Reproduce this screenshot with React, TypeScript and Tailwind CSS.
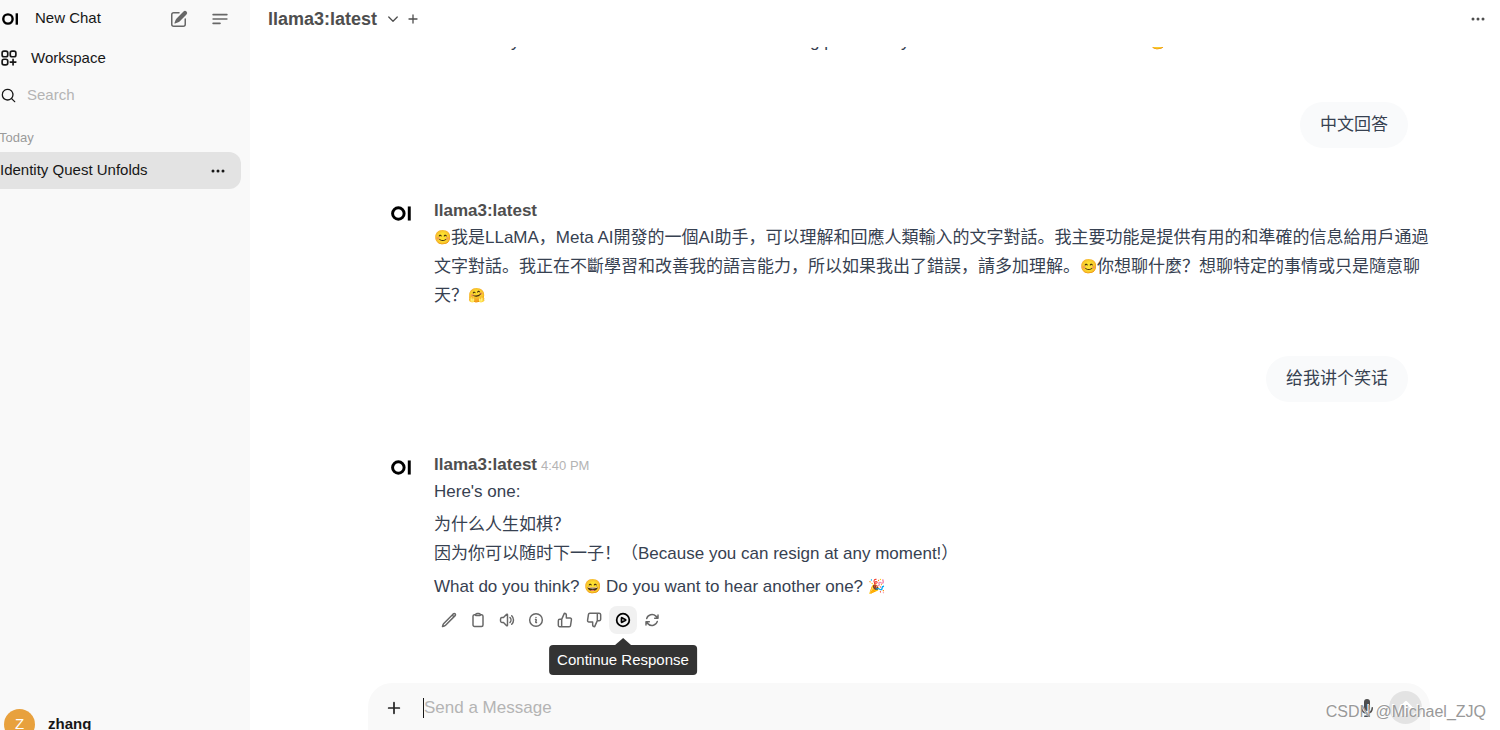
import React, { useState } from 'react';

function Icon({ paths, className, strokeWidth = 2 }: { paths: string[]; className?: string; strokeWidth?: number }) {
  return (
    <svg
      viewBox="0 0 24 24"
      fill="none"
      stroke="currentColor"
      strokeWidth={strokeWidth}
      strokeLinecap="round"
      strokeLinejoin="round"
      className={className}
      aria-hidden="true"
    >
      {paths.map(d => <path key={d} d={d} />)}
    </svg>
  );
}

function SolidIcon({ paths, className }: { paths: string[]; className?: string }) {
  return (
    <svg viewBox="0 0 20 20" fill="currentColor" className={className} aria-hidden="true">
      {paths.map(d => <path key={d} d={d} fillRule="evenodd" />)}
    </svg>
  );
}

function Dots({ className }: { className?: string }) {
  return (
    <svg viewBox="0 0 20 20" fill="currentColor" className={className} aria-hidden="true">
      <circle cx="5" cy="10" r="1.5" />
      <circle cx="10" cy="10" r="1.5" />
      <circle cx="15" cy="10" r="1.5" />
    </svg>
  );
}

function Logo({ className }: { className?: string }) {
  return (
    <svg viewBox="0 0 20 14" className={className} aria-hidden="true">
      <circle cx="7" cy="7" r="5.5" fill="none" stroke="#000" strokeWidth="2.8" />
      <rect x="16" y="0.3" width="2.8" height="13.4" fill="#000" />
    </svg>
  );
}

function Emoji({ children }: { children: string }) {
  return <span className="align-[1px] text-[14px] leading-none">{children}</span>;
}

const WORKSPACE = [
  'M13.5 16.875h3.375m0 0h3.375m-3.375 0V13.5m0 3.375v3.375M6 10.5h2.25a2.25 2.25 0 0 0 2.25-2.25V6a2.25 2.25 0 0 0-2.25-2.25H6A2.25 2.25 0 0 0 3.75 6v2.25A2.25 2.25 0 0 0 6 10.5Zm0 9.75h2.25A2.25 2.25 0 0 0 10.5 18v-2.25a2.25 2.25 0 0 0-2.25-2.25H6a2.25 2.25 0 0 0-2.25 2.25V18A2.25 2.25 0 0 0 6 20.25Zm9.75-9.75H18a2.25 2.25 0 0 0 2.25-2.25V6A2.25 2.25 0 0 0 18 3.75h-2.25A2.25 2.25 0 0 0 13.5 6v2.25a2.25 2.25 0 0 0 2.25 2.25Z',
];
const NEW_CHAT = [
  'M5.433 13.917l1.262-3.155A4 4 0 017.58 9.42l6.92-6.918a2.121 2.121 0 013 3l-6.92 6.918c-.383.383-.84.685-1.343.886l-3.154 1.262a.5.5 0 01-.65-.65z',
  'M3.5 5.75c0-.69.56-1.25 1.25-1.25H10A.75.75 0 0010 3H4.75A2.75 2.75 0 002 5.75v9.5A2.75 2.75 0 004.75 18h9.5A2.75 2.75 0 0017 15.25V10a.75.75 0 00-1.5 0v5.25c0 .69-.56 1.25-1.25 1.25h-9.5c-.69 0-1.25-.56-1.25-1.25v-9.5z',
];
const SEARCH = [
  'M9 3.5a5.5 5.5 0 100 11 5.5 5.5 0 000-11zM2 9a7 7 0 1112.452 4.391l3.328 3.329a.75.75 0 11-1.06 1.06l-3.329-3.328A7 7 0 012 9z',
];
const MIC = [
  'M7 4a3 3 0 016 0v6a3 3 0 11-6 0V4z',
  'M5.5 9.643a.75.75 0 00-1.5 0V10c0 3.06 2.29 5.585 5.25 5.954V17.5h-1.5a.75.75 0 000 1.5h4.5a.75.75 0 000-1.5h-1.5v-1.546A6.001 6.001 0 0016 10v-.357a.75.75 0 00-1.5 0V10a4.5 4.5 0 01-9 0v-.357z',
];
const MENU = ['M3.75 6.75h16.5M3.75 12h16.5m-16.5 5.25H12'];
const CHEVRON = ['M20.5 8l-8.5 8.5L3.5 8'];
const PLUS = ['M12 4v16M4 12h16'];
const ARROW_UP = ['M12 18V5M6 11l6-6 6 6'];

const actions = [
  { label: 'Edit', paths: ['M16.862 4.487l1.687-1.688a1.875 1.875 0 112.652 2.652L6.832 19.82a4.5 4.5 0 01-1.897 1.13l-2.685.8.8-2.685a4.5 4.5 0 011.13-1.897L16.863 4.487zm0 0L19.5 7.125'] },
  { label: 'Copy', paths: ['M15.666 3.888A2.25 2.25 0 0013.5 2.25h-3c-1.03 0-1.9.693-2.166 1.638m7.332 0c.055.194.084.4.084.612v0a.75.75 0 01-.75.75H9a.75.75 0 01-.75-.75v0c0-.212.03-.418.084-.612m7.332 0c.646.049 1.288.11 1.927.184 1.1.128 1.907 1.077 1.907 2.185V19.5a2.25 2.25 0 01-2.25 2.25H6.75A2.25 2.25 0 014.5 19.5V6.257c0-1.108.806-2.057 1.907-2.185a48.208 48.208 0 011.927-.184'] },
  { label: 'Read Aloud', paths: ['M19.114 5.636a9 9 0 010 12.728M16.463 8.288a5.25 5.25 0 010 7.424M6.75 8.25l4.72-4.72a.75.75 0 011.28.53v15.88a.75.75 0 01-1.28.53l-4.72-4.72H4.51c-.88 0-1.704-.507-1.938-1.354A9.01 9.01 0 012.25 12c0-.83.112-1.633.322-2.396C2.806 8.756 3.63 8.25 4.51 8.25H6.75z'] },
  { label: 'Generation Info', paths: ['M11.25 11.25l.041-.02a.75.75 0 011.063.852l-.708 2.836a.75.75 0 001.063.853l.041-.021M21.5 12a9.5 9.5 0 11-19 0 9.5 9.5 0 0119 0zm-9.5-3.75h.008v.008H12V8.25z'] },
  { label: 'Good Response', paths: ['M14 9V5a3 3 0 0 0-3-3l-4 9v11h11.28a2 2 0 0 0 2-1.7l1.38-9a2 2 0 0 0-2-2.3zM7 22H4a2 2 0 0 1-2-2v-7a2 2 0 0 1 2-2h3'] },
  { label: 'Bad Response', paths: ['M10 15v4a3 3 0 0 0 3 3l4-9V2H5.72a2 2 0 0 0-2 1.7l-1.38 9a2 2 0 0 0 2 2.3zm7-13h2.67A2.31 2.31 0 0 1 22 4v7a2.31 2.31 0 0 1-2.33 2H17'] },
  {
    label: 'Continue Response',
    active: true,
    paths: [
      'M21.5 12a9.5 9.5 0 1 1-19 0 9.5 9.5 0 0 1 19 0Z',
      'M15.91 11.672a.375.375 0 0 1 0 .656l-5.603 3.113a.375.375 0 0 1-.557-.328V8.887c0-.286.307-.466.557-.327l5.603 3.112Z',
    ],
  },
  { label: 'Regenerate', paths: ['M16.023 9.348h4.992v-.001M2.985 19.644v-4.992m0 0h4.992m-4.993 0l3.181 3.183a8.25 8.25 0 0013.803-3.7M4.031 9.865a8.25 8.25 0 0113.803-3.7l3.181 3.182m0-4.991v4.99'] },
];

function UserMessage({ children }: { children: React.ReactNode }) {
  return (
    <div className="flex justify-end">
      <div className="rounded-3xl bg-[#f9fafb] px-5 py-2 leading-[30px]">{children}</div>
    </div>
  );
}

function BotMessage({ time, children }: { time?: string; children: React.ReactNode }) {
  return (
    <div className="flex">
      <Logo className="mt-[7px] h-[15px] w-[21px] shrink-0" />
      <div className="ml-[22px] min-w-0 flex-1">
        <div className="flex h-6 items-center gap-1">
          <span className="font-bold text-[#4e4e4e]">llama3:latest</span>
          {time && <span className="pt-0.5 text-[13px] text-[#b4b4b4]">{time}</span>}
        </div>
        {children}
      </div>
    </div>
  );
}

function Sidebar() {
  return (
    <aside className="flex w-[250px] shrink-0 flex-col bg-[#f9f9f9] text-[15px] text-[#171717]">
      <div className="flex h-[37px] items-center">
        <a href="#new" className="flex flex-1 items-center gap-4">
          <Logo className="ml-0.5 h-3 w-[17px]" />
          New Chat
        </a>
        <button aria-label="New chat" className="text-[#676767]">
          <SolidIcon paths={NEW_CHAT} className="size-5" />
        </button>
        <button aria-label="Toggle sidebar" className="mr-5 ml-[21px] text-[#676767]">
          <Icon paths={MENU} className="size-5" />
        </button>
      </div>
      <a href="#workspace" className="mt-[3px] flex h-9 items-center gap-3">
        <Icon paths={WORKSPACE} className="-ml-px size-5" />
        Workspace
      </a>
      <div className="flex h-[39px] items-center">
        <SolidIcon paths={SEARCH} className="size-[17px]" />
        <input
          type="text"
          aria-label="Search"
          placeholder="Search"
          className="ml-[10px] w-44 bg-transparent outline-none placeholder:text-[#b4b4b4]"
        />
      </div>
      <div className="mt-2 -ml-px flex h-[29px] items-center text-[13px] text-[#9b9b9b]">Today</div>
      <div className="mr-[9px] flex h-[37px] items-center justify-between rounded-r-xl bg-[#e3e3e3] pr-[13px]">
        <a href="#chat">Identity Quest Unfolds</a>
        <button aria-label="Chat menu">
          <Dots className="size-5" />
        </button>
      </div>
      <button className="mt-auto -mb-[10px] ml-1 flex h-[31px] shrink-0 items-center gap-[13px] font-bold">
        <span className="flex size-[31px] items-center justify-center rounded-full bg-[#e8a13d] font-normal text-white">Z</span>
        zhang
      </button>
    </aside>
  );
}

export default function App() {
  const [message, setMessage] = useState('');

  return (
    <div className="relative flex h-screen overflow-hidden bg-white font-['Liberation_Sans','Noto_Sans_CJK_SC',sans-serif]">
      <Sidebar />

      <main className="flex min-w-0 flex-1 flex-col">
        <header className="flex h-[47px] shrink-0 items-start justify-between pt-[5px] pr-3 pl-[18px] text-[#4e4e4e]">
          <div className="flex h-7 items-center">
            <button className="flex items-center gap-[10px] text-[18px] font-bold">
              llama3:latest
              <Icon paths={CHEVRON} strokeWidth={2.6} className="size-3" />
            </button>
            <button aria-label="Add model" className="ml-2">
              <Icon paths={PLUS} strokeWidth={2.6} className="size-3" />
            </button>
          </div>
          <button aria-label="More" className="flex h-7 items-center">
            <Dots className="size-5" />
          </button>
        </header>

        <div className="min-h-0 flex-1 overflow-hidden pl-12 text-[17px] text-[#374151]">
          <div className="mx-auto max-w-[1062px] pr-[22px] pl-[23px]">
            {/* last line of the previous answer, scrolled under the header */}
            <div className="-mt-[20px] flex h-[29px] items-center pl-[120px] whitespace-nowrap">
              <span className="w-[299px]">y</span>
              <span className="w-[91px]">g p</span>
              <span className="w-[248px]">y</span>
              <Emoji>😊</Emoji>
            </div>

            <div className="mt-[46px]">
              <UserMessage>中文回答</UserMessage>
            </div>

            <div className="mt-[51px]">
              <BotMessage>
                <p className="leading-[29px] whitespace-nowrap">
                  <Emoji>😊</Emoji>我是LLaMA，Meta AI開發的一個AI助手，可以理解和回應人類輸入的文字對話。我主要功能是提供有用的和準確的信息給用戶通過
                  <br />
                  文字對話。我正在不斷學習和改善我的語言能力，所以如果我出了錯誤，請多加理解。<Emoji>😊</Emoji>你想聊什麼？想聊特定的事情或只是隨意聊
                  <br />
                  天？<Emoji>🤗</Emoji>
                </p>
              </BotMessage>
            </div>

            <div className="mt-[46px]">
              <UserMessage>给我讲个笑话</UserMessage>
            </div>

            <div className="mt-[51px]">
              <BotMessage time="4:40 PM">
                <div className="flex flex-col gap-1 leading-[29px]">
                  <p>Here's one:</p>
                  <p>
                    为什么人生如棋？
                    <br />
                    因为你可以随时下一子！（Because you can resign at any moment!）
                  </p>
                  <p>
                    What do you think? <Emoji>😄</Emoji> Do you want to hear another one? <Emoji>🎉</Emoji>
                  </p>
                </div>
                <div className="mt-[5px] flex gap-px pl-px text-[#676767]">
                  {actions.map(action => (
                    <div key={action.label} className="relative">
                      <button
                        aria-label={action.label}
                        className={
                          action.active
                            ? 'flex size-7 items-center justify-center rounded-lg bg-[#f1f1f1] text-black'
                            : 'flex size-7 items-center justify-center rounded-lg'
                        }
                      >
                        <Icon paths={action.paths} strokeWidth={action.active ? 2.6 : 2.2} className="size-4" />
                      </button>
                      {action.active && (
                        <div role="tooltip" className="absolute top-full left-1/2 flex -translate-x-1/2 flex-col items-center pt-1">
                          <svg viewBox="0 0 16 7" className="h-[7px] w-4" aria-hidden="true">
                            <path d="M0 7 8 0l8 7z" fill="#333" />
                          </svg>
                          <span className="rounded bg-[#333] px-2 py-[5px] text-[15px] leading-5 whitespace-nowrap text-white">
                            {action.label}
                          </span>
                        </div>
                      )}
                    </div>
                  ))}
                </div>
              </BotMessage>
            </div>
          </div>
        </div>

        <div className="shrink-0 pl-12">
          <form className="mx-auto -mb-0.5 flex h-[49px] max-w-[1062px] items-center rounded-t-3xl bg-[#f9f9f9] pr-2 pl-[18px]">
            <button type="button" aria-label="Upload" className="text-[#262626]">
              <Icon paths={PLUS} strokeWidth={2.6} className="size-4" />
            </button>
            <div className="ml-[21px] flex flex-1 items-center">
              <span className="h-5 w-px bg-[#171717]" />
              <input
                type="text"
                aria-label="Send a Message"
                placeholder="Send a Message"
                value={message}
                onChange={e => setMessage(e.target.value)}
                className="flex-1 bg-transparent text-[17px] outline-none placeholder:text-[#b4b4b4]"
              />
            </div>
            <button type="button" aria-label="Record voice" className="text-[#4e4e4e]">
              <SolidIcon paths={MIC} className="size-5" />
            </button>
            <button type="submit" aria-label="Send" className="ml-3 flex size-[33px] items-center justify-center rounded-full bg-[#e3e3e3] text-white">
              <Icon paths={ARROW_UP} strokeWidth={3} className="size-5" />
            </button>
          </form>
        </div>
      </main>

      <div className="pointer-events-none absolute right-[14px] bottom-[6px] text-base text-[#999] [text-shadow:-1px_-1px_0_#fff]">
        CSDN @Michael_ZJQ
      </div>
    </div>
  );
}
